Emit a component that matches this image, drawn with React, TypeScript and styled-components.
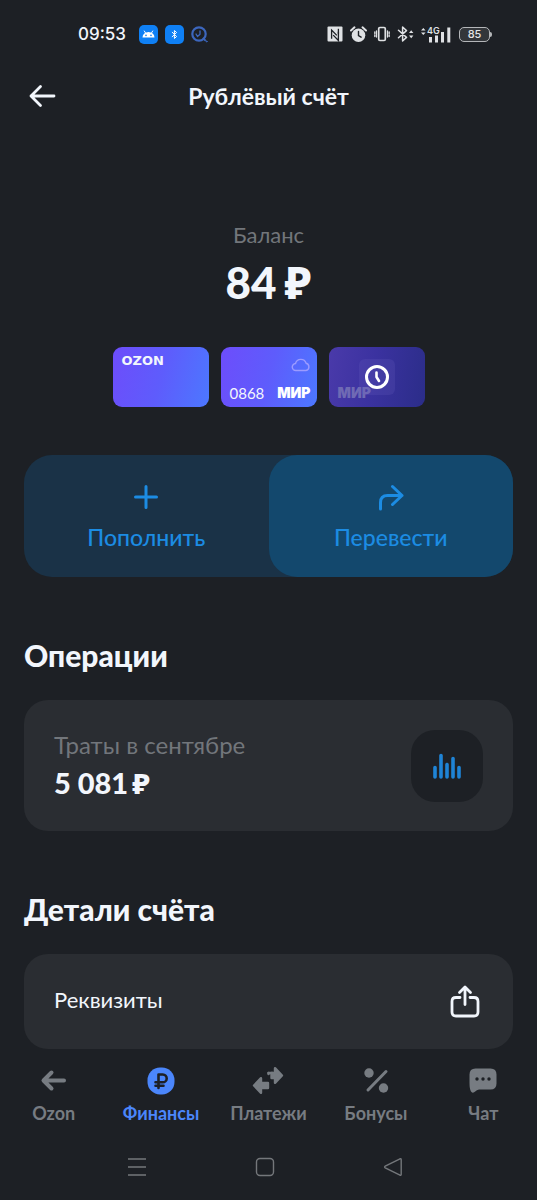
import React from "react";
import styled, { createGlobalStyle } from "styled-components";

const GlobalStyle = createGlobalStyle`
  *, *::before, *::after { box-sizing: border-box; }
  body {
    margin: 0;
    background: #1d2025;
    color: #f2f6fc;
    font-family: Lato, Inter, "Noto Sans", sans-serif;
  }
  button { font: inherit; color: inherit; border: 0; padding: 0; background: none; cursor: pointer; }
  h1, h2, p { margin: 0; }
  svg { display: block; flex: none; }
`;

const Screen = styled.div`
  min-height: 100vh;
  display: flex;
  flex-direction: column;
`;

const StatusBar = styled.div`
  height: 68px;
  padding: 0 45px 0 78px;
  display: flex;
  align-items: center;
  justify-content: space-between;
`;

const StatusGroup = styled.div<{ $gap: number }>`
  display: flex;
  align-items: center;
  gap: ${(p) => p.$gap}px;
`;

const Clock = styled.time`
  font-family: Inter, sans-serif;
  font-size: 17px;
  font-weight: 500;
  line-height: 24px;
  margin-right: 6px;
`;

const Battery = styled.div`
  display: flex;
  align-items: center;
  &::after {
    content: "";
    width: 2px;
    height: 5px;
    border-radius: 0 2px 2px 0;
    background: #b4b6b9;
  }
`;

const BatteryLevel = styled.span`
  width: 31px;
  border: 1px solid #b4b6b9;
  border-radius: 5px;
  background: #33363a;
  color: #e4e5e7;
  font-family: Inter, sans-serif;
  font-size: 11px;
  font-weight: 500;
  line-height: 13px;
  text-align: center;
`;

const Header = styled.header`
  height: 56px;
  padding: 0 24px;
  display: grid;
  grid-template-columns: 36px 1fr 36px;
  align-items: center;
`;

const BackButton = styled.button`
  width: 36px;
  height: 36px;
  display: grid;
  place-items: center;
`;

const Title = styled.h1`
  font-size: 23px;
  font-weight: 700;
  line-height: 32px;
  text-align: center;
`;

const Main = styled.main`
  flex: 1;
  padding: 96px 24px 0;
`;

const Balance = styled.section`
  display: flex;
  flex-direction: column;
  align-items: center;
`;

const Muted = styled.p`
  color: #72767b;
  font-size: 22px;
  line-height: 30px;
`;

const Amount = styled.span<{ $large?: boolean }>`
  display: flex;
  gap: ${(p) => (p.$large ? 8 : 4)}px;
  font-size: ${(p) => (p.$large ? 44 : 29)}px;
  font-weight: 900;
  line-height: ${(p) => (p.$large ? 64 : 36)}px;
`;

const Currency = styled.span`
  font-family: "Open Sans", "Noto Sans", sans-serif;
  font-weight: 800;
`;

const Cards = styled.div`
  margin: 33px 0 48px;
  display: flex;
  justify-content: center;
  gap: 12px;
`;

const BankCard = styled.button<{ $dim?: boolean }>`
  width: 96px;
  height: 60px;
  padding: 6px 6px 4px 9px;
  border-radius: 9px;
  display: flex;
  flex-direction: column;
  align-items: flex-start;
  justify-content: ${(p) => (p.$dim ? "flex-end" : "space-between")};
  text-align: left;
  background: ${(p) =>
    p.$dim
      ? "linear-gradient(100deg, #4a3aaa 0%, #3b32a0 45%, #2b2d89 100%)"
      : "linear-gradient(105deg, #6d4dfb 0%, #5e5cfc 50%, #4c78ff 100%)"};
`;

const OzonMark = styled.span`
  font-family: "DejaVu Sans", sans-serif;
  font-size: 13px;
  font-weight: 700;
  line-height: 16px;
`;

const CardTop = styled.span`
  height: 24px;
  display: flex;
  align-self: stretch;
  align-items: center;
  justify-content: flex-end;
`;

const CardBottom = styled.span`
  display: flex;
  align-self: stretch;
  align-items: center;
  justify-content: space-between;
  line-height: 20px;
`;

const CardNumber = styled.span`
  font-size: 15px;
`;

const MirMark = styled.span<{ $dim?: boolean }>`
  font-family: Inter, sans-serif;
  font-size: 14px;
  font-weight: 900;
  line-height: 20px;
  color: ${(p) => (p.$dim ? "#6f6ab4" : "#ffffff")};
`;

const PendingCard = styled.span`
  display: grid;
  align-self: stretch;
  align-items: end;
  & > * { grid-area: 1 / 1; }
`;

const PendingBadge = styled.span`
  width: 36px;
  height: 36px;
  margin: 0 0 8px 21px;
  border-radius: 6px;
  display: grid;
  place-items: center;
  background: rgba(105, 95, 190, 0.22);
`;

const Actions = styled.div`
  display: flex;
  border-radius: 28px;
  background: #1a3247;
`;

const ActionButton = styled.button<{ $strong?: boolean }>`
  flex: 1;
  height: 122px;
  padding-top: 4px;
  border-radius: 28px;
  background: ${(p) => (p.$strong ? "#13486d" : "transparent")};
  color: #1c8ce3;
  display: flex;
  flex-direction: column;
  align-items: center;
  justify-content: center;
  gap: 10px;
  font-size: 23px;
  font-weight: 500;
  line-height: 32px;
`;

const SectionTitle = styled.h2`
  margin: 60px 0 27px;
  font-size: 30px;
  font-weight: 900;
  line-height: 36px;
`;

const Panel = styled.button<{ $height: number }>`
  width: 100%;
  min-height: ${(p) => p.$height}px;
  padding: 0 30px;
  border-radius: 24px;
  background: #2a2d32;
  display: flex;
  align-items: center;
  justify-content: space-between;
  text-align: left;
`;

const PanelText = styled.span`
  padding-bottom: 4px;
  font-size: 22px;
  line-height: 32px;
`;

const SpendLabel = styled.span`
  display: block;
  padding-bottom: 2px;
  color: #72767b;
  font-size: 24px;
  line-height: 36px;
`;

const ChartTile = styled.span`
  width: 72px;
  height: 72px;
  border-radius: 24px;
  background: #1d2025;
  display: grid;
  place-items: center;
`;

const Footer = styled.footer`
  position: sticky;
  bottom: 0;
  background: #1d2025;
`;

const TabBar = styled.nav`
  display: grid;
  grid-template-columns: repeat(5, 1fr);
  padding: 16px 0 9px;
`;

const Tab = styled.a<{ $active?: boolean }>`
  display: flex;
  flex-direction: column;
  align-items: center;
  gap: 4px;
  color: ${(p) => (p.$active ? "#4b86fb" : "#777c82")};
  text-decoration: none;
  font-size: 18px;
  font-weight: 700;
  line-height: 24px;
`;

const SystemBar = styled.div`
  display: flex;
  height: 66px;
  padding: 0 80px 0 73px;
  color: #74777b;
`;

const SystemButton = styled.button`
  flex: 1;
  display: grid;
  place-items: center;
`;

const line = {
  fill: "none",
  stroke: "currentColor",
  strokeLinecap: "round" as const,
  strokeLinejoin: "round" as const,
};

const AndroidIcon = () => (
  <svg width="19" height="19" viewBox="0 0 19 19">
    <rect width="19" height="19" rx="5" fill="#0f80f5" />
    <path d="M3.5 12.5a6 5.5 0 0 1 12 0z" fill="#fff" />
    <path d="M5.3 6l1.4 2.2M13.7 6l-1.4 2.2" stroke="#fff" strokeWidth="1" strokeLinecap="round" />
    <circle cx="7" cy="10.4" r=".8" fill="#0f80f5" />
    <circle cx="12" cy="10.4" r=".8" fill="#0f80f5" />
  </svg>
);

const BluetoothTile = () => (
  <svg width="19" height="19" viewBox="0 0 19 19">
    <rect width="19" height="19" rx="5" fill="#0f80f5" />
    <path d="M7.2 7.3l4.4 4.2-2.2 2V5.5l2.2 2-4.4 4.2" {...line} stroke="#fff" strokeWidth="1" />
  </svg>
);

const SearchClockIcon = () => (
  <svg width="17" height="17" viewBox="0 0 17 17" {...line} stroke="#3c66bd">
    <circle cx="8" cy="8" r="6.7" strokeWidth="2.2" />
    <path d="M9 5v3.2L6.5 10.5M5 8l1.5 2.500" strokeWidth="1.3" />
    <path d="M12.5 12.5l1.5 1.7" strokeWidth="2" />
    <circle cx="15.6" cy="15.4" r=".5" />
  </svg>
);

const NfcIcon = () => (
  <svg width="16" height="16" viewBox="0 0 16 16">
    <rect x=".5" y=".5" width="15" height="15" rx="1" fill="#dfe1e4" />
    <path d="M4.6 12.8V4l5.200 5.400" fill="none" stroke="#1d2025" strokeWidth="1.3" />
    <path d="M11.4 3.200V12L6.200 6.600" fill="none" stroke="#1d2025" strokeWidth="1.3" transform="translate(0 2.500)" />
    <path d="M11.400 2.800v5" stroke="#1d2025" strokeWidth="1.3" />
  </svg>
);

const AlarmIcon = () => (
  <svg width="17" height="17" viewBox="0 0 17 17">
    <circle cx="8.5" cy="9.2" r="6.8" fill="#dfe1e4" />
    <path d="M1 4.5L4.5 1.3M16 4.5l-3.5-3.2" stroke="#dfe1e4" strokeWidth="2" strokeLinecap="round" />
    <path d="M8.5 5.5v4l2.6 1.7" fill="none" stroke="#1d2025" strokeWidth="1.4" strokeLinecap="round" />
  </svg>
);

const VibrateIcon = () => (
  <svg width="16" height="16" viewBox="0 0 16 16" {...line} stroke="#dfe1e4" strokeWidth="1.7">
    <rect x="4.7" y="1.5" width="6.6" height="13" rx="1.2" />
    <path d="M2.5 5v6M.8 6v1.5M.8 9v1.5M13.5 5v6M15.2 6v1.5M15.2 9v1.5" strokeWidth="1.3" />
  </svg>
);

const BluetoothIcon = () => (
  <svg width="17" height="16" viewBox="0 0 17 16">
    <path d="M1.5 4.2l8 7.2L5.6 15V1l3.9 3.6-8 7.2" {...line} stroke="#dfe1e4" strokeWidth="1.5" />
    <path d="M12 7l2.2-2.8L16.4 7zM12 9.5l2.2 2.8 2.2-2.8z" fill="#dfe1e4" />
  </svg>
);

const SignalIcon = () => (
  <svg width="31" height="17" viewBox="0 0 31 17">
    <path d="M0 4.5L2.3 2l2.3 2.5zM0 6.5L2.3 9l2.3-2.5z" fill="#dfe1e4" />
    <text x="6" y="8" fontFamily="Inter, sans-serif" fontSize="9" fontWeight="600" fill="#dfe1e4">4G</text>
    <path d="M9.5 11v5.5M15.5 9.5v7M21.5 6v10.5M27.8 1.5v15" stroke="#dfe1e4" strokeWidth="3" />
  </svg>
);

const RubleIcon = () => (
  <svg width="32" height="32" viewBox="0 0 32 32">
    <rect x="2.5" y="2.5" width="27" height="27" rx="12.5" fill="currentColor" />
    <path d="M13.5 23V9.5h4.3a3.9 3.9 0 0 1 0 7.8H10.5M10.5 20.7h8" fill="none" stroke="#1d2025" strokeWidth="2.6" strokeLinecap="round" strokeLinejoin="round" />
  </svg>
);

const TransferIcon = () => (
  <svg width="32" height="32" viewBox="0 0 32 32" fill="currentColor" stroke="currentColor" strokeWidth="2.4" strokeLinejoin="round">
    <path d="M23 3.200L30 10.500 23 17.800V13h-3.500V8H23z" />
    <path d="M16.500 8v1" strokeLinecap="round" />
    <path d="M16.500 8h4" strokeLinecap="round" />
    <path d="M9 13.200L2 20.500 9 27.800V23h7v-5H9z" />
  </svg>
);

const tabs = [
  {
    label: "Ozon",
    icon: (
      <svg width="32" height="32" viewBox="0 0 32 32" {...line} strokeWidth="4">
        <path d="M26 15.5H6M13.5 7.5l-8 8 8 8" />
      </svg>
    ),
  },
  { label: "Финансы", icon: <RubleIcon />, active: true },
  { label: "Платежи", icon: <TransferIcon /> },
  {
    label: "Бонусы",
    icon: (
      <svg width="32" height="32" viewBox="0 0 32 32">
        <circle cx="9" cy="8" r="4.7" fill="currentColor" />
        <circle cx="23.5" cy="23" r="4.7" fill="currentColor" />
        <path d="M26 6.5L8 25" stroke="currentColor" strokeWidth="3" strokeLinecap="round" />
      </svg>
    ),
  },
  {
    label: "Чат",
    icon: (
      <svg width="32" height="32" viewBox="0 0 32 32">
        <path d="M8.5 3.5h15q6 0 6 6v9q0 6-6 6H12q-2 0-4.5 2.5-2.3 1.5-3.5-.5Q2.5 24 2.5 18V9.5q0-6 6-6z" fill="currentColor" />
        <g fill="#1d2025">
          <circle cx="10" cy="14" r="1.7" />
          <circle cx="16" cy="14" r="1.7" />
          <circle cx="22" cy="14" r="1.7" />
        </g>
      </svg>
    ),
  },
];

export default function App() {
  return (
    <Screen>
      <GlobalStyle />
      <StatusBar>
        <StatusGroup $gap={7}>
          <Clock>09:53</Clock>
          <AndroidIcon />
          <BluetoothTile />
          <SearchClockIcon />
        </StatusGroup>
        <StatusGroup $gap={7}>
          <NfcIcon />
          <AlarmIcon />
          <VibrateIcon />
          <BluetoothIcon />
          <SignalIcon />
          <Battery>
            <BatteryLevel>85</BatteryLevel>
          </Battery>
        </StatusGroup>
      </StatusBar>

      <Header>
        <BackButton aria-label="Назад">
          <svg width="28" height="24" viewBox="0 0 28 24" {...line} strokeWidth="2.8">
            <path d="M26 12H3M12.5 2.5L3 12l9.5 9.5" />
          </svg>
        </BackButton>
        <Title>Рублёвый счёт</Title>
      </Header>

      <Main>
        <Balance>
          <Muted>Баланс</Muted>
          <Amount $large>
            84 <Currency>₽</Currency>
          </Amount>
        </Balance>

        <Cards>
          <BankCard>
            <OzonMark>OZON</OzonMark>
          </BankCard>
          <BankCard>
            <CardTop>
              <svg width="20" height="14" viewBox="0 0 20 14" {...line} stroke="#9c9bff" strokeWidth="1.4">
                <path d="M5 12.5a3.5 3.5 0 0 1-.5-7 5.5 5.5 0 0 1 10.6-.2A3.7 3.7 0 0 1 15 12.5z" />
              </svg>
            </CardTop>
            <CardBottom>
              <CardNumber>0868</CardNumber>
              <MirMark>МИР</MirMark>
            </CardBottom>
          </BankCard>
          <BankCard $dim>
            <PendingCard>
              <MirMark $dim>МИР</MirMark>
              <PendingBadge>
                <svg width="26" height="26" viewBox="0 0 26 26" {...line} stroke="#fff" strokeWidth="3">
                  <circle cx="13" cy="13" r="10.5" />
                  <path d="M12.5 8.5V13l2.5 4" strokeWidth="2.6" />
                </svg>
              </PendingBadge>
            </PendingCard>
          </BankCard>
        </Cards>

        <Actions>
          <ActionButton>
            <svg width="28" height="28" viewBox="0 0 28 28" {...line} strokeWidth="3">
              <path d="M14 3.5v21M3.5 14h21" />
            </svg>
            Пополнить
          </ActionButton>
          <ActionButton $strong>
            <svg width="28" height="28" viewBox="0 0 28 28" {...line} strokeWidth="3">
              <path d="M3.5 26v-6.5q0-7 7-7H25M15.5 3.5l9.5 9-9.5 9" />
            </svg>
            Перевести
          </ActionButton>
        </Actions>

        <SectionTitle>Операции</SectionTitle>
        <Panel $height={131}>
          <PanelText>
            <SpendLabel>Траты в сентябре</SpendLabel>
            <Amount>
              5 081 <Currency>₽</Currency>
            </Amount>
          </PanelText>
          <ChartTile>
            <svg width="32" height="28" viewBox="0 0 32 28" {...line} stroke="#1f84d6" strokeWidth="3.6">
              <path d="M4 15.5v9.5M10 3.5v21.5M16 12.5v12.5M22 6.5v18.500M28 15.5v9.5" />
            </svg>
          </ChartTile>
        </Panel>

        <SectionTitle>Детали счёта</SectionTitle>
        <Panel $height={95}>
          <PanelText>Реквизиты</PanelText>
          <svg width="36" height="36" viewBox="0 0 36 36" {...line} strokeWidth="2.8">
            <path d="M13 13.5H9q-4 0-4 4V28q0 4 4 4h18q4 0 4-4V17.5q0-4-4-4h-4M18 20.5V3.5M12.5 8.500L18 3l5.5 5.500" />
          </svg>
        </Panel>
      </Main>

      <Footer>
        <TabBar>
          {tabs.map((tab) => (
            <Tab key={tab.label} href="#" $active={tab.active} aria-current={tab.active ? "page" : undefined}>
              {tab.icon}
              {tab.label}
            </Tab>
          ))}
        </TabBar>
        <SystemBar>
          <SystemButton aria-label="Меню">
            <svg width="20" height="20" viewBox="0 0 20 20" stroke="currentColor" strokeWidth="1.6">
              <path d="M1 2h18M1 10h18M1 18h18" />
            </svg>
          </SystemButton>
          <SystemButton aria-label="Домой">
            <svg width="20" height="20" viewBox="0 0 20 20" {...line} strokeWidth="1.4">
              <rect x="1.5" y="1.5" width="17" height="17" rx="3.5" />
            </svg>
          </SystemButton>
          <SystemButton aria-label="Назад">
            <svg width="20" height="20" viewBox="0 0 20 20" {...line} strokeWidth="1.4">
              <path d="M17 1.8L2.2 9.2q-1.2.8 0 1.6L17 18.2q1.2.3 1.2-1V2.8q0-1.3-1.2-1z" />
            </svg>
          </SystemButton>
        </SystemBar>
      </Footer>
    </Screen>
  );
}
